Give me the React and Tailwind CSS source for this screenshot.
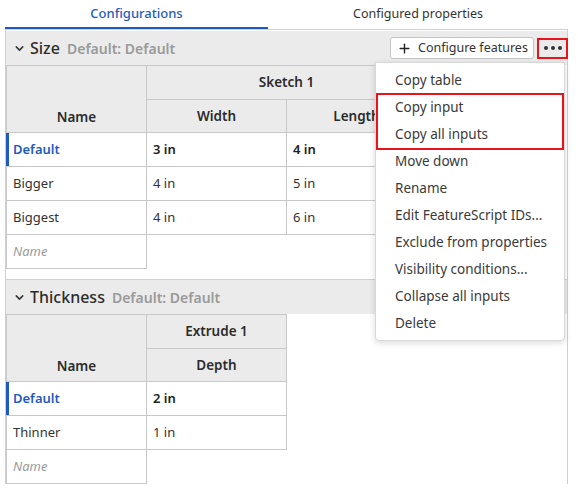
import { Plus, ChevronDown } from 'lucide-react';

const font = { fontFamily: '"Noto Sans", "Open Sans", sans-serif' };

function SectionHeader({ title }) {
  return (
    <div className="flex h-[34px] items-center bg-[#ebebeb] pl-[7px]">
      <ChevronDown size={13} strokeWidth={2.75} className="text-[#333]" />
      <span className="ml-[4px] text-[16px] font-medium text-[#2b2b2b]">{title}</span>
      <span className="ml-[7px] text-[14px] font-semibold text-[#9a9a9a]">Default: Default</span>
    </div>
  );
}

const th = 'border border-[#c8c8c8] bg-[#ebebeb] text-center text-[13.5px] font-semibold text-[#2b2b2b]';
const cell = 'h-[34px] border border-[#c8c8c8] bg-white px-[6px] text-left text-[13px]';
const td = cell + ' text-[#333]';
const tdBold = cell + ' font-semibold text-[#222]';
const tdDefault = cell + ' relative font-semibold text-[#1f5bbf]';
const tdEmpty = cell + ' italic text-[#9a9a9a]';

function DefaultCell() {
  return (
    <td className={tdDefault}>
      <span className="absolute bottom-0 left-[-1px] top-0 w-[3px] bg-[#1f5bbf]" />
      Default
    </td>
  );
}

export default function App() {
  const menu = [
    'Copy table',
    'Copy input',
    'Copy all inputs',
    'Move down',
    'Rename',
    'Edit FeatureScript IDs...',
    'Exclude from properties',
    'Visibility conditions...',
    'Collapse all inputs',
    'Delete',
  ];

  return (
    <div className="relative h-[492px] w-[578px] overflow-hidden bg-white" style={font}>
      <div className="flex h-[29px] pl-[5px]">
        <div className="flex w-[263px] items-center justify-center border-b-2 border-[#1f5bbf] text-[13px] font-medium text-[#1f5bbf]">
          Configurations
        </div>
        <div className="flex w-[300px] items-center justify-center text-[12.5px] text-[#333]">
          Configured properties
        </div>
      </div>

      <div className="ml-[5px] w-[563px] border-x border-t border-[#d0d0d0]">
        <div className="relative">
          <div className="h-[1px]" />
          <SectionHeader title="Size" />
          <div className="absolute right-[-1px] top-[7px] flex items-center gap-[3px]">
            <button className="flex h-[22px] w-[144px] items-center gap-[6px] rounded-[3px] border border-[#c4c4c4] bg-white pl-[6px] text-[12.5px] text-[#333]">
              <Plus size={15} strokeWidth={2.25} className="text-[#222]" />
              Configure features
            </button>
            <div className="flex h-[21px] w-[31px] items-center justify-center gap-[3px] border-2 border-[#e8141c]">
              <span className="h-[4px] w-[4px] rounded-full bg-[#333]" />
              <span className="h-[4px] w-[4px] rounded-full bg-[#333]" />
              <span className="h-[4px] w-[4px] rounded-full bg-[#333]" />
            </div>
          </div>
        </div>

        <table className="border-collapse">
          <thead>
            <tr>
              <th rowSpan={2} className={th + ' w-[140px] pt-[36px]'}>Name</th>
              <th colSpan={2} className={th + ' h-[34px]'}>Sketch 1</th>
            </tr>
            <tr>
              <th className={th + ' h-[33px] w-[140px]'}>Width</th>
              <th className={th + ' h-[33px] w-[140px]'}>Length</th>
            </tr>
          </thead>
          <tbody>
            <tr>
              <DefaultCell />
              <td className={tdBold}>3 in</td>
              <td className={tdBold}>4 in</td>
            </tr>
            <tr>
              <td className={td}>Bigger</td>
              <td className={td}>4 in</td>
              <td className={td}>5 in</td>
            </tr>
            <tr>
              <td className={td}>Biggest</td>
              <td className={td}>4 in</td>
              <td className={td}>6 in</td>
            </tr>
            <tr>
              <td className={tdEmpty}>Name</td>
            </tr>
          </tbody>
        </table>

        <div className="mt-[10px] border-t border-[#d0d0d0]">
          <SectionHeader title="Thickness" />
        </div>

        <table className="border-collapse">
          <thead>
            <tr>
              <th rowSpan={2} className={th + ' w-[140px] pt-[36px]'}>Name</th>
              <th className={th + ' h-[34px] w-[140px]'}>Extrude 1</th>
            </tr>
            <tr>
              <th className={th + ' h-[33px]'}>Depth</th>
            </tr>
          </thead>
          <tbody>
            <tr>
              <DefaultCell />
              <td className={tdBold}>2 in</td>
            </tr>
            <tr>
              <td className={td}>Thinner</td>
              <td className={td}>1 in</td>
            </tr>
            <tr>
              <td className={tdEmpty}>Name</td>
            </tr>
          </tbody>
        </table>
      </div>

      <div className="absolute left-[375px] top-[62px] w-[190px] rounded-b-[4px] border border-[#d8d8d8] bg-white pb-[3px] pt-[4px] shadow-[0_2px_6px_rgba(0,0,0,0.15)]">
        {menu.map((m) => (
          <div key={m} className="flex h-[27px] items-center pl-[19px] text-[13.5px] text-[#3a3a3a]">
            {m}
          </div>
        ))}
        <div className="pointer-events-none absolute left-0 right-0 top-[30px] h-[57px] border-2 border-[#e8141c]" />
      </div>
    </div>
  );
}
